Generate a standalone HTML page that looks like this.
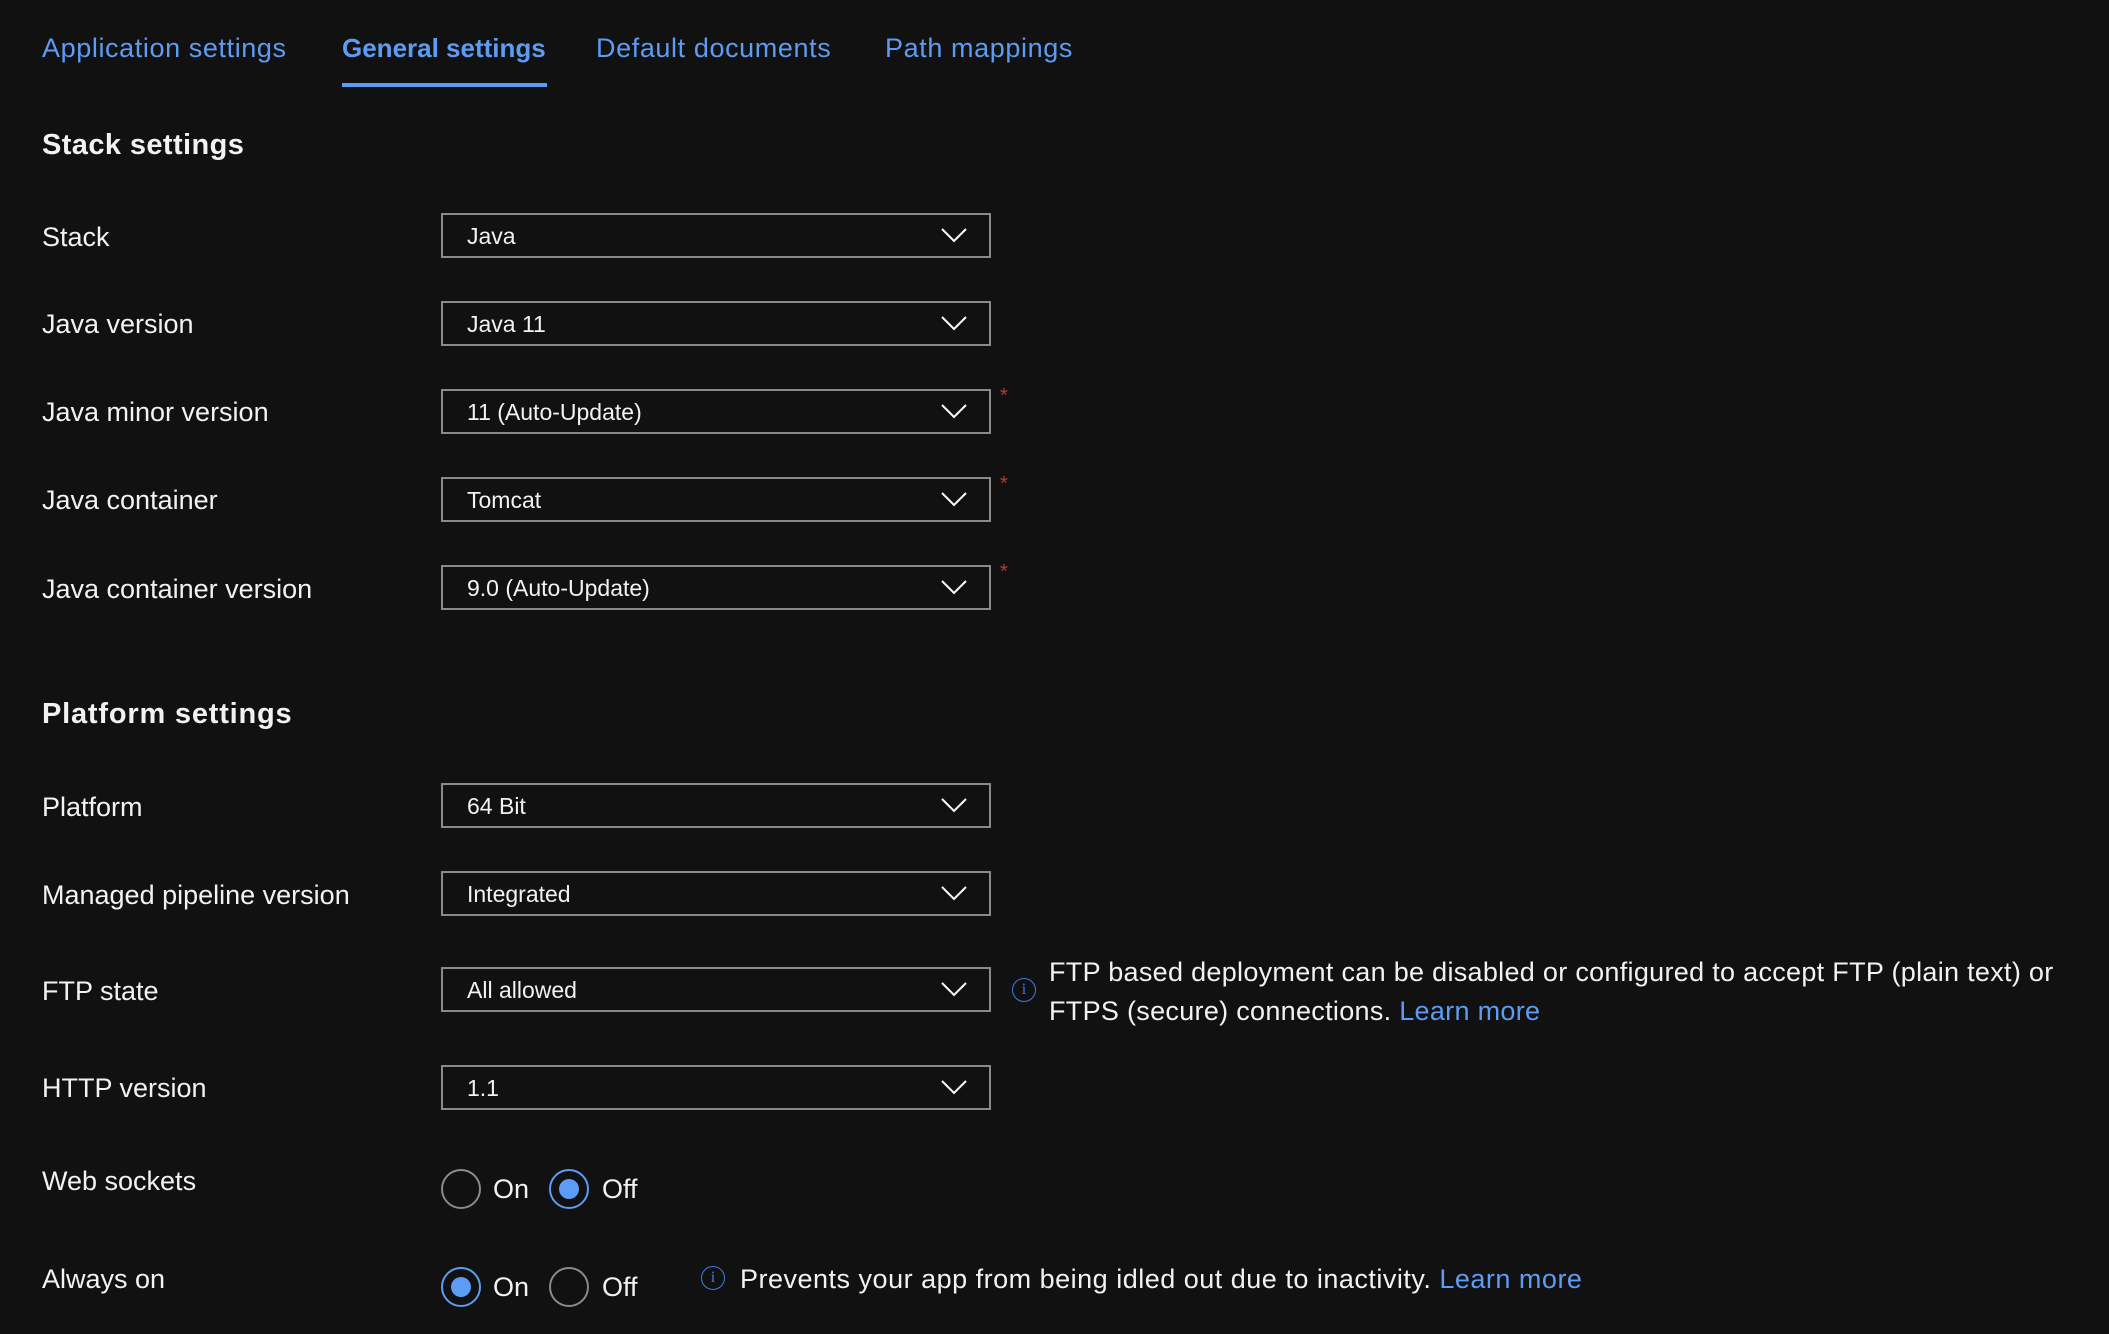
<!DOCTYPE html>
<html><head><meta charset="utf-8"><style>
html,body{margin:0;padding:0;background:#111111;width:2109px;height:1334px;overflow:hidden;font-family:"Liberation Sans",sans-serif;color:#f2f2f2}
.a{position:absolute;white-space:nowrap}
.tab{font-size:27px;color:#5c9cf5;line-height:40px;top:28px;letter-spacing:0.6px}
.h{font-size:29px;font-weight:bold;line-height:40px;left:42px;letter-spacing:0.4px}
.lab{font-size:27px;line-height:40px;left:42px}
.dd{position:absolute;left:441px;width:546px;height:41px;border:2px solid #8a8a8a;box-sizing:content-box}
.dd span{position:absolute;left:24px;top:1px;line-height:41px;font-size:23px;color:#f2f2f2}
.dd svg{position:absolute;right:22px;top:13px}
.ast{position:absolute;left:1000px;color:#b83a3a;font-size:20px;line-height:20px}
.rad{position:absolute;width:36px;height:36px;border:2px solid #8a8a8a;border-radius:50%}
.rad.on{border-color:#5c9cf5}
.rad.on::after{content:"";position:absolute;left:8px;top:8px;width:20px;height:20px;border-radius:50%;background:#5c9cf5}
.rt{font-size:27px;line-height:40px}
.info{position:absolute;width:22px;height:22px;border:1.5px solid #3c7ce6;border-radius:50%;color:#3c7ce6;font-size:16px;line-height:22px;text-align:center;font-family:"Liberation Serif",serif}
.txt{font-size:27px;line-height:38px;letter-spacing:0.3px}
.link{color:#5c9cf5}
</style></head><body>
<div class="a tab" style="left:42px">Application settings</div>
<div class="a tab" style="left:342px;font-weight:bold;letter-spacing:0;font-size:26px">General settings</div>
<div class="a" style="left:342px;top:83px;width:205px;height:4px;background:#5c9cf5"></div>
<div class="a tab" style="left:596px">Default documents</div>
<div class="a tab" style="left:885px">Path mappings</div>

<div class="a h" style="top:125px">Stack settings</div>

<div class="a lab" style="top:217px">Stack</div>
<div class="dd" style="top:213px"><span>Java</span><svg width="26" height="15" viewBox="0 0 26 15"><path d="M1 1 L13 13 L25 1" fill="none" stroke="#fff" stroke-width="2"/></svg></div>

<div class="a lab" style="top:304px">Java version</div>
<div class="dd" style="top:301px"><span>Java 11</span><svg width="26" height="15" viewBox="0 0 26 15"><path d="M1 1 L13 13 L25 1" fill="none" stroke="#fff" stroke-width="2"/></svg></div>

<div class="a lab" style="top:392px">Java minor version</div>
<div class="dd" style="top:389px"><span>11 (Auto-Update)</span><svg width="26" height="15" viewBox="0 0 26 15"><path d="M1 1 L13 13 L25 1" fill="none" stroke="#fff" stroke-width="2"/></svg></div>
<div class="ast" style="top:386px">*</div>

<div class="a lab" style="top:480px">Java container</div>
<div class="dd" style="top:477px"><span>Tomcat</span><svg width="26" height="15" viewBox="0 0 26 15"><path d="M1 1 L13 13 L25 1" fill="none" stroke="#fff" stroke-width="2"/></svg></div>
<div class="ast" style="top:474px">*</div>

<div class="a lab" style="top:569px">Java container version</div>
<div class="dd" style="top:565px"><span>9.0 (Auto-Update)</span><svg width="26" height="15" viewBox="0 0 26 15"><path d="M1 1 L13 13 L25 1" fill="none" stroke="#fff" stroke-width="2"/></svg></div>
<div class="ast" style="top:562px">*</div>

<div class="a h" style="top:694px;letter-spacing:0.8px">Platform settings</div>

<div class="a lab" style="top:787px">Platform</div>
<div class="dd" style="top:783px"><span>64 Bit</span><svg width="26" height="15" viewBox="0 0 26 15"><path d="M1 1 L13 13 L25 1" fill="none" stroke="#fff" stroke-width="2"/></svg></div>

<div class="a lab" style="top:875px">Managed pipeline version</div>
<div class="dd" style="top:871px"><span>Integrated</span><svg width="26" height="15" viewBox="0 0 26 15"><path d="M1 1 L13 13 L25 1" fill="none" stroke="#fff" stroke-width="2"/></svg></div>

<div class="a lab" style="top:971px">FTP state</div>
<div class="dd" style="top:967px"><span>All allowed</span><svg width="26" height="15" viewBox="0 0 26 15"><path d="M1 1 L13 13 L25 1" fill="none" stroke="#fff" stroke-width="2"/></svg></div>
<div class="info" style="left:1012px;top:978px">i</div>
<div class="a txt" style="left:1049px;top:953px">FTP based deployment can be disabled or configured to accept FTP (plain text) or</div>
<div class="a txt" style="left:1049px;top:992px">FTPS (secure) connections. <span class="link">Learn more</span></div>

<div class="a lab" style="top:1068px">HTTP version</div>
<div class="dd" style="top:1065px"><span>1.1</span><svg width="26" height="15" viewBox="0 0 26 15"><path d="M1 1 L13 13 L25 1" fill="none" stroke="#fff" stroke-width="2"/></svg></div>

<div class="a lab" style="top:1161px">Web sockets</div>
<div class="rad" style="left:441px;top:1169px"></div>
<div class="a rt" style="left:493px;top:1169px">On</div>
<div class="rad on" style="left:549px;top:1169px"></div>
<div class="a rt" style="left:602px;top:1169px">Off</div>

<div class="a lab" style="top:1259px">Always on</div>
<div class="rad on" style="left:441px;top:1267px"></div>
<div class="a rt" style="left:493px;top:1267px">On</div>
<div class="rad" style="left:549px;top:1267px"></div>
<div class="a rt" style="left:602px;top:1267px">Off</div>
<div class="info" style="left:701px;top:1266px">i</div>
<div class="a txt" style="left:740px;top:1260px;letter-spacing:0.5px">Prevents your app from being idled out due to inactivity. <span class="link">Learn more</span></div>
</body></html>
